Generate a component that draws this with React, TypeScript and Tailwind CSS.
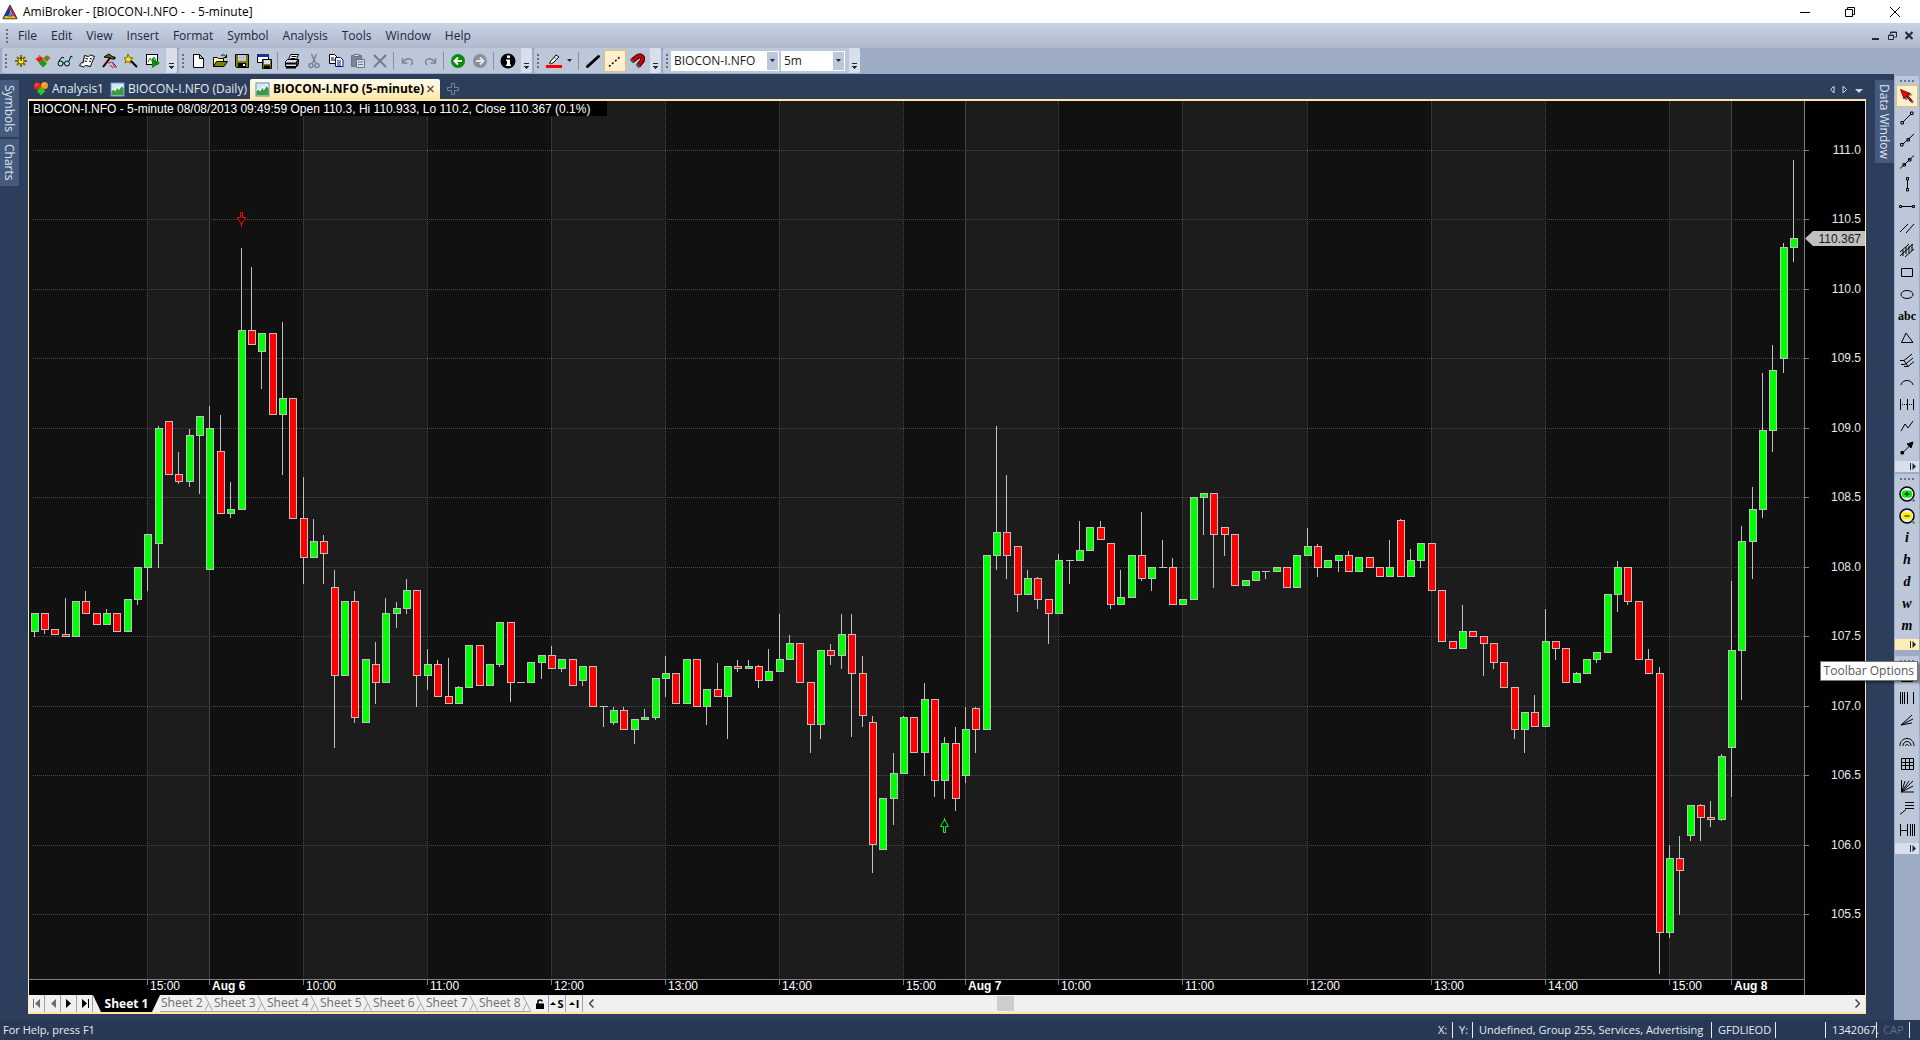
import type { ReactNode } from 'react'

// [high, body top, body bottom, low, direction], in plot units
type Candle = [number, number, number, number, 'up' | 'down' | 'flat']

const CANDLES: Candle[] = [
  [613, 613, 631, 636, 'up'],
  [613, 613, 629, 633, 'down'],
  [629, 629, 634, 634, 'down'],
  [598, 634, 636, 636, 'down'],
  [601, 601, 636, 636, 'up'],
  [591, 601, 613, 613, 'down'],
  [613, 613, 624, 624, 'down'],
  [609, 613, 624, 624, 'up'],
  [613, 613, 631, 631, 'down'],
  [599, 599, 631, 631, 'up'],
  [567, 567, 599, 604, 'up'],
  [534, 534, 567, 590, 'up'],
  [426, 428, 543, 567, 'up'],
  [421, 421, 474, 474, 'down'],
  [452, 474, 481, 483, 'down'],
  [429, 435, 481, 486, 'up'],
  [416, 416, 435, 493, 'up'],
  [406, 428, 569, 569, 'up'],
  [415, 451, 513, 513, 'down'],
  [482, 509, 513, 517, 'up'],
  [248, 330, 509, 509, 'up'],
  [267, 330, 344, 344, 'down'],
  [333, 333, 351, 388, 'up'],
  [333, 333, 414, 414, 'down'],
  [322, 398, 414, 474, 'up'],
  [398, 398, 518, 518, 'down'],
  [477, 518, 557, 583, 'down'],
  [519, 541, 557, 557, 'up'],
  [535, 541, 553, 583, 'down'],
  [570, 587, 675, 747, 'down'],
  [601, 601, 675, 675, 'up'],
  [591, 601, 717, 722, 'down'],
  [659, 659, 722, 722, 'up'],
  [642, 664, 682, 703, 'down'],
  [598, 613, 682, 682, 'up'],
  [602, 608, 613, 627, 'up'],
  [579, 590, 608, 613, 'up'],
  [590, 590, 675, 706, 'down'],
  [649, 664, 675, 689, 'up'],
  [660, 664, 696, 696, 'down'],
  [658, 696, 703, 703, 'down'],
  [686, 687, 703, 703, 'up'],
  [645, 645, 687, 687, 'up'],
  [645, 645, 685, 685, 'down'],
  [664, 664, 685, 685, 'up'],
  [622, 622, 664, 666, 'up'],
  [622, 622, 682, 701, 'down'],
  [682, 682, 682, 682, 'flat'],
  [662, 662, 682, 682, 'up'],
  [655, 655, 662, 678, 'up'],
  [646, 655, 668, 668, 'down'],
  [659, 659, 668, 671, 'up'],
  [659, 659, 685, 685, 'down'],
  [666, 666, 680, 685, 'up'],
  [666, 666, 706, 706, 'down'],
  [706, 706, 706, 726, 'flat'],
  [707, 710, 722, 724, 'up'],
  [707, 710, 729, 729, 'down'],
  [719, 719, 729, 743, 'up'],
  [709, 717, 719, 719, 'up'],
  [678, 678, 717, 719, 'up'],
  [656, 673, 678, 696, 'up'],
  [673, 673, 703, 703, 'down'],
  [659, 659, 703, 703, 'up'],
  [659, 659, 706, 706, 'down'],
  [689, 689, 706, 724, 'up'],
  [663, 689, 696, 696, 'down'],
  [666, 666, 696, 738, 'up'],
  [660, 666, 668, 671, 'down'],
  [660, 666, 668, 668, 'up'],
  [665, 666, 680, 687, 'down'],
  [649, 671, 680, 680, 'up'],
  [614, 659, 671, 671, 'up'],
  [635, 643, 659, 659, 'up'],
  [643, 643, 682, 682, 'down'],
  [682, 682, 724, 752, 'down'],
  [650, 650, 724, 738, 'up'],
  [644, 650, 655, 664, 'down'],
  [614, 634, 655, 668, 'up'],
  [614, 634, 673, 736, 'down'],
  [656, 673, 715, 726, 'down'],
  [716, 722, 844, 872, 'down'],
  [798, 798, 849, 849, 'up'],
  [753, 773, 798, 824, 'up'],
  [716, 717, 773, 773, 'up'],
  [717, 717, 752, 752, 'down'],
  [683, 699, 752, 775, 'up'],
  [699, 699, 780, 796, 'down'],
  [737, 743, 780, 798, 'up'],
  [727, 743, 798, 810, 'down'],
  [707, 729, 775, 782, 'up'],
  [707, 708, 729, 752, 'down'],
  [555, 555, 729, 729, 'up'],
  [426, 532, 555, 569, 'up'],
  [475, 532, 555, 578, 'down'],
  [546, 546, 594, 611, 'down'],
  [570, 578, 594, 594, 'up'],
  [577, 578, 599, 608, 'down'],
  [599, 599, 613, 643, 'down'],
  [554, 560, 613, 613, 'up'],
  [560, 560, 560, 583, 'flat'],
  [521, 550, 560, 560, 'up'],
  [527, 527, 550, 550, 'up'],
  [521, 527, 539, 539, 'down'],
  [543, 543, 604, 608, 'down'],
  [570, 597, 604, 604, 'up'],
  [555, 555, 597, 597, 'up'],
  [512, 555, 578, 580, 'down'],
  [567, 567, 578, 590, 'up'],
  [540, 567, 567, 567, 'flat'],
  [558, 567, 604, 604, 'down'],
  [599, 599, 604, 604, 'up'],
  [497, 497, 599, 599, 'up'],
  [493, 493, 497, 534, 'up'],
  [493, 493, 534, 587, 'down'],
  [527, 527, 534, 555, 'down'],
  [534, 534, 585, 585, 'down'],
  [580, 580, 585, 585, 'up'],
  [571, 571, 580, 580, 'up'],
  [571, 571, 571, 578, 'flat'],
  [567, 567, 571, 571, 'up'],
  [567, 567, 587, 587, 'down'],
  [555, 555, 587, 587, 'up'],
  [528, 546, 555, 555, 'up'],
  [544, 546, 567, 576, 'down'],
  [560, 560, 567, 567, 'up'],
  [555, 555, 560, 571, 'up'],
  [551, 555, 571, 571, 'down'],
  [557, 557, 571, 571, 'up'],
  [557, 557, 567, 567, 'down'],
  [567, 567, 576, 576, 'down'],
  [540, 567, 576, 576, 'up'],
  [519, 520, 576, 576, 'down'],
  [549, 560, 576, 576, 'up'],
  [543, 543, 560, 567, 'up'],
  [543, 543, 590, 590, 'down'],
  [590, 590, 641, 641, 'down'],
  [641, 641, 648, 648, 'down'],
  [605, 631, 648, 648, 'up'],
  [631, 631, 636, 636, 'down'],
  [636, 636, 643, 675, 'down'],
  [643, 643, 662, 668, 'down'],
  [662, 662, 687, 687, 'down'],
  [687, 687, 729, 738, 'down'],
  [712, 712, 729, 752, 'up'],
  [695, 712, 726, 726, 'down'],
  [609, 641, 726, 726, 'up'],
  [641, 641, 648, 659, 'down'],
  [648, 648, 682, 682, 'down'],
  [672, 673, 682, 682, 'up'],
  [659, 659, 673, 673, 'up'],
  [652, 652, 659, 662, 'up'],
  [594, 594, 652, 652, 'up'],
  [561, 567, 594, 611, 'up'],
  [567, 567, 601, 604, 'down'],
  [601, 601, 659, 659, 'down'],
  [649, 659, 673, 673, 'down'],
  [667, 673, 932, 973, 'down'],
  [845, 858, 932, 937, 'up'],
  [836, 858, 870, 914, 'down'],
  [805, 805, 835, 840, 'up'],
  [804, 805, 817, 840, 'down'],
  [801, 817, 819, 826, 'down'],
  [754, 756, 819, 820, 'up'],
  [581, 650, 747, 796, 'up'],
  [526, 541, 650, 699, 'up'],
  [487, 509, 541, 578, 'up'],
  [373, 430, 509, 517, 'up'],
  [345, 370, 430, 451, 'up'],
  [243, 247, 358, 372, 'up'],
  [160, 238, 247, 261, 'up'],
]

const FIRST_BAR_X = 34
const BAR_STEP = 10.3505
const PLOT = { left: 29, top: 101, right: 1804, bottom: 979 }

const CANDLE_FILL = { up: '#00ff00', down: '#ff0000', flat: 'none' }

const barX = (i: number) => FIRST_BAR_X + Math.floor(i * BAR_STEP)

const TIME_MARKS: { bar: number; label: string; day?: boolean }[] = [
  { bar: 11, label: '15:00' },
  { bar: 17, label: 'Aug 6', day: true },
  { bar: 26, label: '10:00' },
  { bar: 38, label: '11:00' },
  { bar: 50, label: '12:00' },
  { bar: 61, label: '13:00' },
  { bar: 72, label: '14:00' },
  { bar: 84, label: '15:00' },
  { bar: 90, label: 'Aug 7', day: true },
  { bar: 99, label: '10:00' },
  { bar: 111, label: '11:00' },
  { bar: 123, label: '12:00' },
  { bar: 135, label: '13:00' },
  { bar: 146, label: '14:00' },
  { bar: 158, label: '15:00' },
  { bar: 164, label: 'Aug 8', day: true },
]

const PRICES = [111, 110.5, 110, 109.5, 109, 108.5, 108, 107.5, 107, 106.5, 106, 105.5]
const priceY = (p: number) => Math.round(150 + (111 - p) * 138.9)

const MENUS = ['File', 'Edit', 'View', 'Insert', 'Format', 'Symbol', 'Analysis', 'Tools', 'Window', 'Help']
const SHEETS = ['Sheet 2', 'Sheet 3', 'Sheet 4', 'Sheet 5', 'Sheet 6', 'Sheet 7', 'Sheet 8']

function Icon({ children, size = 16 }: { children: ReactNode; size?: number }) {
  return (
    <svg width={size} height={size} viewBox="0 0 16 16" fill="none" stroke="#000" aria-hidden="true" className="shrink-0">
      {children}
    </svg>
  )
}

function Chart() {
  const edges = [PLOT.left, ...TIME_MARKS.map((m) => barX(m.bar)), PLOT.right]
  return (
    <svg
      viewBox="29 101 1836 894"
      className="block min-h-0 w-full flex-1 bg-black font-['Liberation_Sans',Arial,sans-serif] text-[12px]"
      role="img"
      aria-label="BIOCON-I.NFO 5-minute candlestick chart"
    >
      {edges.slice(1).map((x, i) => (
        <rect
          key={x}
          x={edges[i]}
          y={PLOT.top}
          width={x - edges[i]}
          height={PLOT.bottom - PLOT.top}
          fill={i % 2 ? '#1c1c1c' : '#111111'}
        />
      ))}
      {PRICES.map((p) => (
        <g key={p}>
          <path d={`M33 ${priceY(p) + 0.5}H1804`} stroke="#4a4a4a" strokeDasharray="1 1" />
          <path d={`M1804 ${priceY(p) + 0.5}H1809`} stroke="#808080" />
          <text x={1861} y={priceY(p) + 4} textAnchor="end" fill="#e8e8e8">
            {p.toFixed(1)}
          </text>
        </g>
      ))}
      {TIME_MARKS.map((m) => {
        const x = barX(m.bar)
        return (
          <g key={m.bar}>
            <path d={`M${x + 0.5} 101V979`} stroke={m.day ? '#444444' : '#4a4a4a'} strokeDasharray={m.day ? undefined : '1 1'} />
            <path d={`M${x + 0.5} 979V985`} stroke="#808080" />
            <text x={x + 3} y={990} fill="#fff" fontWeight={m.day ? 700 : 400}>
              {m.label}
            </text>
          </g>
        )
      })}
      <path d="M29 979.5H1804.5M1804.5 101V995" stroke="#808080" />

      {CANDLES.map(([high, top, bottom, low, dir], i) => {
        const x = barX(i)
        return (
          <g key={i} stroke="#c0c0c0">
            {high < top && <path d={`M${x + 0.5} ${high}V${top}`} />}
            {low > bottom && <path d={`M${x + 0.5} ${bottom + 1}V${low + 1}`} />}
            {dir === 'flat' ? (
              <path d={`M${x - 3} ${top + 0.5}H${x + 5}`} />
            ) : (
              <rect x={x - 2.5} y={top + 0.5} width={7} height={bottom - top} fill={CANDLE_FILL[dir]} />
            )}
          </g>
        )
      })}

      <path d="M240.5 212.5h2v5h3l-4 7-4-7h3z M241.5 223v4" stroke="#ff0000" />
      <path d="M943.5 832.5h2v-6h3l-4-7-4 7h3z M944.5 818v3" stroke="#00ff00" />

      <rect x={29} y={101} width={578} height={15} fill="#000" />
      <text x={33} y={113} fill="#fff">
        BIOCON-I.NFO - 5-minute 08/08/2013 09:49:59 Open 110.3, Hi 110.933, Lo 110.2, Close 110.367 (0.1%)
      </text>

      <path d="M1805 238.5L1813 231H1865V246H1813z" fill="#c0c0c0" />
      <text x={1861} y={243} textAnchor="end" fill="#1a1a1a">
        110.367
      </text>
    </svg>
  )
}

function Grip() {
  return <span className="mx-[3px] h-[14px] w-[2px] shrink-0 bg-[repeating-linear-gradient(#62708c_0_2px,transparent_2px_4px)]" />
}

function ToolButton({ label, active, children }: { label: string; active?: boolean; children: ReactNode }) {
  return (
    <button
      aria-label={label}
      className={`flex h-[22px] w-[22px] shrink-0 items-center justify-center ${
        active ? 'border border-[#e5c365] bg-[#fff1cf]' : ''
      }`}
    >
      {children}
    </button>
  )
}

function Separator() {
  return <span className="mr-[3px] ml-[2px] h-[18px] w-px shrink-0 bg-[#8591a8]" />
}

function Toolbar({ name, children }: { name: string; children: ReactNode }) {
  return (
    <div role="toolbar" aria-label={name} className="flex h-[25px] items-center rounded-[2px] bg-[#bcc7d9]">
      <Grip />
      {children}
      <button aria-label={`${name} options`} className="ml-[2px] flex h-full w-[11px] items-end justify-center rounded-r-[2px] bg-[#d8dfea] pb-[4px]">
        <svg width="5" height="6" viewBox="0 0 5 6" aria-hidden="true" shapeRendering="crispEdges">
          <path d="M0 0h5v1H0zM0 3h5L2.5 6z" fill="#1b293e" />
        </svg>
      </button>
    </div>
  )
}

function Combo({ label, value, width }: { label: string; value: string; width: string }) {
  return (
    <label className={`mr-[2px] flex h-[20px] items-center border border-white bg-white ${width}`}>
      <select aria-label={label} className="h-full min-w-0 flex-1 appearance-none bg-white pl-[2px] text-[12px] leading-[18px] text-[#1b1b1b]">
        <option>{value}</option>
      </select>
      <span className="flex h-full w-[11px] items-center justify-center bg-[#bcc7d9]">
        <svg width="5" height="3" viewBox="0 0 5 3" aria-hidden="true">
          <path d="M0 0h5L2.5 3z" fill="#1b293e" />
        </svg>
      </span>
    </label>
  )
}

function Gems() {
  return (
    <Icon>
      <path d="M.5 6L4.500 2 8.500 6 4.500 10z" fill="#e02020" stroke="none" />
      <path d="M8 5L11.500 1.500 15.500 5 11.500 9z" fill="#7f7a12" stroke="none" />
      <path d="M4 10.500L8 6.500 12 10.500 8 14.500z" fill="#12a012" stroke="none" />
      <path d="M2 5l2.500-2 1 1M9 4l2.500-2 1 1" stroke="#ffffff" strokeOpacity=".5" />
    </Icon>
  )
}

function BrightGems() {
  return (
    <Icon>
      <circle cx="4.500" cy="5" r="3.500" fill="#e8281c" stroke="none" />
      <circle cx="11.500" cy="4.500" r="3.500" fill="#f0a020" stroke="none" />
      <path d="M4 10L8 6l4.500 4L8 14.500z" fill="#28c828" stroke="none" />
      <path d="M2.500 4.500l2-1.500M9.500 4l2-1.500" stroke="#fff" strokeOpacity=".6" />
    </Icon>
  )
}

function ChartThumb() {
  return (
    <Icon size={15}>
      <rect x="1" y="1" width="14" height="14" fill="#cfe6f7" stroke="#5b93c4" />
      <path d="M1.500 14V10l2-2 2 2 2-4 2 3 3-5 2 3v7z" fill="#3f9a3c" stroke="none" />
      <path d="M2 9l2-2 1.500 2L8 5l2 2 2-4 2 3" stroke="#fff" />
    </Icon>
  )
}

function MainToolbars() {
  return (
    <div className="flex h-[26px] items-start gap-[2px] bg-[#9dabc4] pl-[2px]">
      <Toolbar name="Analysis">
        <ToolButton label="Settings">
          <Icon>
            <path d="M8 2v12M2 8h12M4 4l8 8M12 4l-8 8" stroke="#7a6a00" strokeWidth="2" />
            <circle cx="8" cy="8" r="3" fill="#ffe94a" stroke="#7a6a00" />
            <path d="M8 5v3" />
          </Icon>
        </ToolButton>
        <ToolButton label="New analysis">
          <Gems />
        </ToolButton>
        <ToolButton label="Explore">
          <Icon>
            <circle cx="3.500" cy="10.500" r="2.500" fill="#8fe5e5" />
            <circle cx="10" cy="10.500" r="2.500" fill="#8fe5e5" />
            <path d="M6 10h1.500M2 8l3-4 2 1M12 8l2-5 1.500 1" />
          </Icon>
        </ToolButton>
        <ToolButton label="Report">
          <Icon>
            <path d="M5.500 2.500l4 1 2-1.500 4 1.500-3 7-1 3-5-1-2 1.500-4-1.500 2-3 1.500.5z" fill="#fff" />
            <path d="M6.500 5.500l2.500.5M5.500 8l2.500.5M11 5.500l2 .5M10 8l2 .5" />
          </Icon>
        </ToolButton>
        <ToolButton label="Formula editor">
          <Icon>
            <path d="M3 4l5-3 4 3 2 0 0 2-3 0-2-1z" fill="#6b6400" />
            <path d="M9 5l-7 9" strokeWidth="2" />
            <path d="M4 10c1-2 3 0 4 0s3-2 4 0 0 4 2 4h2M9 12l3 3" stroke="#e00000" />
            <path d="M11 9l4 4" stroke="#1530c0" />
          </Icon>
        </ToolButton>
        <ToolButton label="Wizard">
          <Icon>
            <path d="M5 1l1.500 3.500L10 5 7.500 7l.5 3-3-1.500L2 10l1-3L1 5l3-.5z" fill="#f4e02a" stroke="#7a6a00" />
            <path d="M8 8l6 6" strokeWidth="2" />
          </Icon>
        </ToolButton>
        <ToolButton label="Run chart">
          <Icon>
            <rect x="1.500" y="1.500" width="11" height="10" fill="#fff" />
            <path d="M3 9l2-4 2 3 2-4 2 3" stroke="#108010" />
            <path d="M7 5l8 5-8 5z" fill="#0b8a0b" stroke="none" />
          </Icon>
        </ToolButton>
      </Toolbar>

      <Toolbar name="Standard">
        <ToolButton label="New">
          <Icon>
            <path d="M3.500 1.500h6l4 4v9h-10zM9.500 1.500v4h4" fill="#fff" />
          </Icon>
        </ToolButton>
        <ToolButton label="Open">
          <Icon>
            <path d="M1.500 13.500v-9h4l1 1h5v3" fill="#fff8a0" />
            <path d="M1.500 13.500l3-5h11l-3.500 5z" fill="#808000" />
            <path d="M9 3c2-2 4-1 5 1M14.500 1.500v3h-3" />
          </Icon>
        </ToolButton>
        <ToolButton label="Save">
          <Icon>
            <path d="M1.500 1.500h13v13h-12l-1-1z" fill="#808000" />
            <path d="M4 2h8v6H4z" fill="#bcc7d9" stroke="none" />
            <path d="M4 10h8v4H4z" fill="#000" stroke="none" />
            <path d="M9 11h2v2H9z" fill="#fff" stroke="none" />
          </Icon>
        </ToolButton>
        <ToolButton label="Save layout">
          <Icon>
            <path d="M1.500 1.500h11v8h-11z" fill="#fff" />
            <path d="M1 1h12v3H1z" fill="#1a2f9a" stroke="none" />
            <path d="M6.500 6.500h9v9h-9z" fill="#808000" />
            <path d="M8 7h6v4H8z" fill="#d8dfea" stroke="none" />
            <path d="M8 12.500h6v3H8z" fill="#000" stroke="none" />
          </Icon>
        </ToolButton>
        <Separator />
        <ToolButton label="Print">
          <Icon>
            <path d="M4.500 6.500l2-5h8l-2 5" fill="#fff" />
            <path d="M7.500 3.500h5M6.500 5.500h5" />
            <path d="M1.500 8.500l2-2h11l-2 2v5h-11z" fill="#d8dfea" />
            <path d="M12.500 8.500l2-2v5l-2 2.500z" fill="#555" />
            <path d="M1 10.500h12M2 14.500h10" strokeWidth="2" />
          </Icon>
        </ToolButton>
        <ToolButton label="Cut">
          <Icon>
            <path d="M5.500 1l4 9M10.500 1l-4 9" stroke="#7b8494" strokeWidth="1.500" />
            <circle cx="5" cy="12.500" r="2" stroke="#7b8494" strokeWidth="1.500" />
            <circle cx="11" cy="12.500" r="2" stroke="#7b8494" strokeWidth="1.500" />
          </Icon>
        </ToolButton>
        <ToolButton label="Copy">
          <Icon>
            <path d="M1.500 1.500h5l2.500 2.500v6.500H1.500zM3 5h3M3 7h4" fill="#fff" />
            <path d="M7.500 4.500h5l2.500 2.500v6.500H7.500z" fill="#fff" stroke="#101080" />
            <path d="M9 8h4M9 10h4M9 12h4" stroke="#101080" />
          </Icon>
        </ToolButton>
        <ToolButton label="Paste">
          <Icon>
            <path d="M1.500 2.500h10v11h-10z" fill="#7b8494" stroke="#6a7382" />
            <path d="M4 1.500h5v2H4z" fill="#d8dfea" stroke="#6a7382" />
            <path d="M6.500 6.500h8v8h-8z" fill="#d8dfea" stroke="#6a7382" />
            <path d="M8 9h5M8 11.500h5" stroke="#6a7382" />
          </Icon>
        </ToolButton>
        <ToolButton label="Delete">
          <Icon>
            <path d="M2 2l12 12M14 2L2 14" stroke="#727b8b" strokeWidth="2" />
          </Icon>
        </ToolButton>
        <Separator />
        <ToolButton label="Undo">
          <Icon>
            <path d="M2.500 5v5h5M3 9.500c2-4 6-4.500 8-3s2 3 0 5.500" stroke="#7b8494" strokeWidth="1.500" />
          </Icon>
        </ToolButton>
        <ToolButton label="Redo">
          <Icon>
            <path d="M13.500 5v5h-5M13 9.500c-2-4-6-4.500-8-3s-2 3 0 5.500" stroke="#7b8494" strokeWidth="1.500" />
          </Icon>
        </ToolButton>
        <Separator />
        <ToolButton label="Back">
          <Icon>
            <circle cx="8" cy="8" r="7" fill="#0a8a0a" stroke="none" />
            <path d="M12 8H5M8 4.500L4.500 8 8 11.500" stroke="#fff" strokeWidth="2" />
          </Icon>
        </ToolButton>
        <ToolButton label="Forward">
          <Icon>
            <circle cx="8" cy="8" r="7" fill="#8a8f98" stroke="none" />
            <path d="M4 8h7M8 4.500L11.500 8 8 11.500" stroke="#dfe4ec" strokeWidth="2" />
          </Icon>
        </ToolButton>
        <Separator />
        <ToolButton label="Information">
          <Icon>
            <circle cx="8" cy="8" r="7.500" fill="#000" stroke="none" />
            <path d="M7 2.500h3v2.500H7zM6 6.500h4v5h1V13H6v-1.500h1V8H6z" fill="#fff" stroke="none" />
          </Icon>
        </ToolButton>
      </Toolbar>

      <Toolbar name="Format">
        <button aria-label="Line colour" className="flex h-[22px] w-[34px] items-center justify-center gap-[5px]">
          <Icon>
            <path d="M4 9l6-7 3 2-6 6-3 1z" fill="#fff" />
            <path d="M8 4l3 2.500" stroke="#2040d0" />
            <path d="M3 10.500h4" stroke="#108010" />
            <path d="M0 12h16v3H0z" fill="#ff0000" stroke="none" />
          </Icon>
          <svg width="5" height="3" viewBox="0 0 5 3" aria-hidden="true">
            <path d="M0 0h5L2.500 3z" fill="#1b293e" />
          </svg>
        </button>
        <Separator />
        <ToolButton label="Thick line">
          <Icon>
            <path d="M2.500 13.500l11-10" strokeWidth="3" strokeLinecap="round" />
          </Icon>
        </ToolButton>
        <ToolButton label="Dotted line" active>
          <Icon>
            <path d="M2 13.500L14 3" strokeWidth="1.500" strokeDasharray="2 2" />
          </Icon>
        </ToolButton>
        <ToolButton label="Magnet">
          <Icon>
            <path d="M3 8l5-4c4-3 7 1 5 4l-4 5" stroke="#300" strokeWidth="5" />
            <path d="M3 8l5-4c4-3 7 1 5 4l-4 5" stroke="#c80000" strokeWidth="3" />
            <path d="M1.500 6.500l3 3M7.500 11.500l3 3" stroke="#555" strokeWidth="2" />
          </Icon>
        </ToolButton>
      </Toolbar>

      <Toolbar name="Ticker">
        <Combo label="Symbol" value="BIOCON-I.NFO" width="w-[108px]" />
        <Combo label="Interval" value="5m" width="w-[64px]" />
      </Toolbar>
    </div>
  )
}

const DRAW_TOOLS: { label: string; icon: ReactNode; active?: boolean }[] = [
  {
    label: 'Select',
    active: true,
    icon: (
      <>
        <path d="M3 3l11 4-4 1 5 6-2 1.500L9 10l-2 3z" fill="#777" stroke="none" />
        <path d="M1.500 1.500l10 4-3.500 1.500 5 5.500-1.500 1L7 8l-2 3z" fill="#ff0000" stroke="#300" strokeWidth=".7" />
      </>
    ),
  },
  { label: 'Trend line', icon: <path d="M4.500 11.500l7-7M2 11.500h2.500V14H2zM11.500 2H14v2.500h-2.500z" /> },
  { label: 'Ray', icon: <path d="M4 12L15 2M1.500 11.500H4V14H1.500zM8 6.500h2.500V9H8z" /> },
  { label: 'Extended line', icon: <path d="M1 14.500L15 1.500M4 9.500h2.500V12H4zM9.500 4.500H12V7H9.500z" /> },
  { label: 'Vertical line', icon: <path d="M8.500 4v8M7.500 1.500h2V4h-2zM7.500 12.500h2V15h-2z" /> },
  { label: 'Horizontal line', icon: <path d="M3 8.500h10M.5 7.500h2v2h-2zM13.500 7.500h2v2h-2z" /> },
  { label: 'Parallel', icon: <path d="M1 12L9 4M7 13l8-9" /> },
  { label: 'Regression channel', icon: <path d="M1 10L10 2M1 14L14 2M6 15l9-8M4 8v6M7 5v7M10 4v7M13 2v7" /> },
  { label: 'Rectangle', icon: <path d="M2.500 4.500h11v8h-11z" /> },
  { label: 'Ellipse', icon: <ellipse cx="8" cy="8.500" rx="6" ry="4" /> },
  { label: 'Text', icon: null },
  { label: 'Triangle', icon: <path d="M7 3L2.500 12.500h11.500z" /> },
  { label: 'Pitchfork', icon: <path d="M1 8.500h4L13 2M2 12.500h4l8-6.500M5 14.500h4l6-5M5 8.500l4 6" /> },
  { label: 'Arc', icon: <path d="M2 11c1-6 11-6 12 0" /> },
  { label: 'Cycle', icon: <path d="M1.500 3v11M8.500 3v11M14.500 3v11M3 8.500h1M5 8.500h1M7 8.500h1M10 8.500h1M12 8.500h1" /> },
  { label: 'Zig-zag', icon: <path d="M2 13l4-7 3 4 5-7" /> },
  { label: 'Arrow', icon: <path d="M4.500 12l6-6M2 11.500h2.500V14H2zM8 4l6-2-2 6z" fill="#000" /> },
]

const ZOOM_TOOLS: { label: string; fill: string; d: string }[] = [
  { label: 'Zoom in', fill: '#00f000', d: 'M5.500 8h5M8 5.500v5' },
  { label: 'Zoom out', fill: '#fff000', d: 'M5.500 8h5' },
]

const PERIODS = ['i', 'h', 'd', 'w', 'm']

const FIB_TOOLS: { label: string; d: string }[] = [
  { label: 'Retracement', d: 'M2 3.500h12M2 6.500h12M2 9.500h12M2 13.500h12' },
  { label: 'Time zones', d: 'M1.500 2v12M3.500 2v12M5.500 2v12M8.500 2v12M14.500 2v12' },
  { label: 'Fan', d: 'M2 13L13 3M2 13l12-6M2 13l11-2' },
  { label: 'Arcs', d: 'M1 12c0-10 14-10 14 0M4 12c0-6 8-6 8 0M6.500 12c0-2 3-2 3 0' },
  { label: 'Gann square', d: 'M2.500 2.500h12v11h-12zM6.500 2.500v11M10.500 2.500v11M2.500 6.500h12M2.500 9.500h12' },
  { label: 'Gann fan', d: 'M2.500 2v12H15M2.500 14L6 3M2.500 14L14 3M2.500 14L14 8M2.500 14L10 3' },
  { label: 'Extension', d: 'M1 14.500l6-5M6 2.500h9M6 5.500h9M6 8.500h9' },
  { label: 'Time extension', d: 'M1.500 2v12M1.500 8.500h7M8.500 2v12M11.500 2v12M13.500 2v12M15.500 2v12' },
]

function SideToolbar({ name, hot, children }: { name: string; hot?: boolean; children: ReactNode }) {
  return (
    <div role="toolbar" aria-label={name} aria-orientation="vertical" className="mx-px flex flex-col items-center rounded-[2px] bg-[#bcc7d9]">
      <span className="mt-[4px] mb-[3px] h-[2px] w-[14px] bg-[repeating-linear-gradient(90deg,#62708c_0_2px,transparent_2px_4px)]" />
      {children}
      <button
        aria-label={`${name} options`}
        className={`mt-[2px] flex h-[11px] w-full items-center justify-end pr-[3px] ${hot ? 'bg-[#ffedb8]' : 'bg-[#d8dfea]'}`}
      >
        <svg width="6" height="7" viewBox="0 0 6 7" aria-hidden="true">
          <path d="M0 0h1v7H0zM2.500 0v7L6 3.500z" fill="#1b293e" />
        </svg>
      </button>
    </div>
  )
}

function SideToolbars() {
  return (
    <div className="flex w-[26px] shrink-0 flex-col bg-[#9dabc4] pt-[2px]">
      <SideToolbar name="Draw">
        {DRAW_TOOLS.map((t) => (
          <ToolButton key={t.label} label={t.label} active={t.active}>
            {t.icon ? (
              <Icon>{t.icon}</Icon>
            ) : (
              <span className="font-['Liberation_Serif',serif] text-[12px] leading-none font-bold">abc</span>
            )}
          </ToolButton>
        ))}
      </SideToolbar>
      <div className="h-[2px]" />
      <SideToolbar name="View" hot>
        {ZOOM_TOOLS.map((t) => (
          <ToolButton key={t.label} label={t.label}>
            <Icon>
              <circle cx="8" cy="8" r="7" fill="#e8edf5" strokeWidth="1.500" />
              <rect x="3" y="4.500" width="10" height="7" rx="2" fill={t.fill} stroke="none" />
              <path d={t.d} />
              <path d="M13 13l2.500 2.500" stroke="#777" strokeWidth="2" />
            </Icon>
          </ToolButton>
        ))}
        {PERIODS.map((p) => (
          <ToolButton key={p} label={`Period ${p}`}>
            <span className="font-['Liberation_Serif',serif] text-[14px] leading-none font-bold italic">{p}</span>
          </ToolButton>
        ))}
      </SideToolbar>
      <div className="h-[6px]" />
      <SideToolbar name="Fibonacci">
        {FIB_TOOLS.map((t) => (
          <ToolButton key={t.label} label={t.label}>
            <Icon>
              <path d={t.d} />
            </Icon>
          </ToolButton>
        ))}
      </SideToolbar>
    </div>
  )
}

function SideTab({ label, height }: { label: string; height: string }) {
  return (
    <button className={`flex w-[19px] items-center justify-center bg-[#465a7d] text-[12px] leading-[19px] text-[#dfe5ef] [writing-mode:vertical-rl] ${height}`}>
      {label}
    </button>
  )
}

function DocumentTabs() {
  return (
    <div className="flex h-[25px] shrink-0 items-end text-[12px] leading-[18px] text-[#e6ebf3]">
      <button className="flex h-[20px] w-[77px] items-center gap-[3px] pl-[5px] whitespace-nowrap">
        <BrightGems />
        Analysis1
      </button>
      <button className="flex h-[20px] w-[145px] items-center gap-[3px] pl-[5px] whitespace-nowrap">
        <ChartThumb />
        BIOCON-I.NFO (Daily)
      </button>
      <button className="flex h-[20px] w-[190px] items-center gap-[3px] rounded-t-[2px] bg-gradient-to-b from-[#fffcf0] to-[#ffe8a6] pl-[5px] font-bold whitespace-nowrap text-black">
        <ChartThumb />
        BIOCON-I.NFO (5-minute)
        <svg width="8" height="8" viewBox="0 0 8 8" className="mr-[6px] ml-auto" aria-hidden="true">
          <path d="M.5.5l7 7M7.500.5l-7 7" stroke="#5c5138" strokeWidth="1.500" />
        </svg>
      </button>
      <button aria-label="New tab" className="ml-[7px] flex h-[20px] items-center">
        <svg width="12" height="12" viewBox="0 0 12 12" fill="none" aria-hidden="true">
          <path d="M4.500.5h3v4h4v3h-4v4h-3v-4h-4v-3h4z" stroke="#76849d" />
        </svg>
      </button>
      <div className="mr-[3px] ml-auto flex h-[20px] items-center gap-[7px]">
        <svg width="6" height="9" viewBox="0 0 6 9" fill="none" stroke="#cdd5e3">
          <path d="M5 1v7L1.500 4.500z" />
        </svg>
        <svg width="6" height="9" viewBox="0 0 6 9" fill="none" stroke="#cdd5e3">
          <path d="M1 1v7l3.500-3.500z" />
        </svg>
        <svg width="8" height="9" viewBox="0 0 8 9">
          <path d="M0 4h8L4 8z" fill="#cdd5e3" />
        </svg>
      </div>
    </div>
  )
}

function NavButton({ label, d, dim, width }: { label: string; d: string; dim?: boolean; width: string }) {
  return (
    <button aria-label={label} className={`flex h-full items-center justify-center border-r border-[#a0a0a0] bg-[#f0f0f0] ${width}`}>
      <svg width="10" height="9" viewBox="0 0 10 9" aria-hidden="true">
        <path d={d} fill={dim ? '#6d6d6d' : '#000'} />
      </svg>
    </button>
  )
}

function SheetBar() {
  return (
    <div className="flex h-[17px] shrink-0 bg-[#f0f0f0] text-[12px] leading-[16px]">
      <NavButton label="First sheet" dim width="w-[16px]" d="M1 0h1v9H1zM8 0v9L3 4.500z" />
      <NavButton label="Previous sheet" dim width="w-[16px]" d="M8 0v9L3 4.500z" />
      <NavButton label="Next sheet" width="w-[16px]" d="M2 0v9l5-4.500z" />
      <NavButton label="Last sheet" width="w-[16px]" d="M2 0v9l5-4.500zM8 0h1v9H8z" />
      <button className="h-full w-[67px] bg-black text-center font-bold text-white [clip-path:polygon(0_0,100%_0,88%_100%,12%_100%)]">
        Sheet 1
      </button>
      {SHEETS.map((s) => (
        <button key={s} className="flex h-full w-[53px] shrink-0 items-center justify-between border-b border-[#a0a0a0] text-[#6d6d6d]">
          <span className="pl-px whitespace-nowrap">{s}</span>
          <svg width="11" height="16" viewBox="0 0 11 16" fill="none" stroke="#a0a0a0" aria-hidden="true">
            <path d="M2 0l8 16M2 16l4-8" />
          </svg>
        </button>
      ))}
      <button aria-label="Lock sheet" className="flex h-full w-[18px] items-center justify-center border-r border-[#a0a0a0]">
        <svg width="8" height="10" viewBox="0 0 8 10" fill="none" aria-hidden="true">
          <path d="M2 5V2.500C2 .5 6 .5 6 2.500" stroke="#000" strokeWidth="1.500" />
          <path d="M0 4.500h8V10H0z" fill="#000" />
        </svg>
      </button>
      {['S', 'I'].map((s) => (
        <button key={s} aria-label={`Scale ${s}`} className="flex h-full w-[17px] items-center justify-center gap-px border-r border-[#a0a0a0] text-[11px] font-bold">
          <svg width="6" height="3" viewBox="0 0 6 3" aria-hidden="true">
            <path d="M0 3h6L3 0z" fill="#000" />
          </svg>
          {s}
        </button>
      ))}
      <div className="flex min-w-0 flex-1 items-center pr-[5px] pl-[6px]">
        <svg width="5" height="9" viewBox="0 0 5 9" fill="none" stroke="#444" strokeWidth="1.500">
          <path d="M4.500.5l-4 4 4 4" />
        </svg>
        <span className="flex-[403]" />
        <span className="h-[15px] w-[17px] bg-[#cdcdcd]" />
        <span className="flex-[842]" />
        <svg width="5" height="9" viewBox="0 0 5 9" fill="none" stroke="#444" strokeWidth="1.500">
          <path d="M.5.5l4 4-4 4" />
        </svg>
      </div>
    </div>
  )
}

function StatusBar() {
  const cell = 'flex h-[16px] items-center border-r border-[#e6ebf3] pl-[6px] whitespace-nowrap'
  return (
    <footer className="flex h-[20px] shrink-0 items-center bg-[#293955] pr-[10px] pl-[3px] text-[11px] leading-[16px] text-[#e6ebf3]">
      <span>For Help, press F1</span>
      <span className={`ml-auto w-[21px] ${cell}`}>X:</span>
      <span className={`w-[20px] ${cell}`}>Y:</span>
      <span className={`w-[239px] ${cell}`}>Undefined, Group 255, Services, Advertising</span>
      <span className={`w-[64px] ${cell}`}>GFDLIEOD</span>
      <span className={`w-[50px] ${cell}`} />
      <span className={`w-[51px] ${cell}`}>1342067.</span>
      <span className={`w-[33px] text-[#5b6a86] ${cell}`}>CAP</span>
    </footer>
  )
}

export default function App() {
  return (
    <div className="relative flex h-screen min-w-[1200px] flex-col overflow-hidden bg-[#2d3e5c] font-['Open_Sans',sans-serif]">
      <header className="flex h-[23px] shrink-0 items-center bg-white pl-[2px] text-[12px] text-black">
        <Icon>
          <path d="M8 1L1 14h4l3-6z" fill="#2030c8" stroke="none" />
          <path d="M8 1l7 13h-3L7 4z" fill="#d02040" stroke="none" />
          <path d="M1 15l2-3h9l3 3z" fill="#e8c020" stroke="none" />
          <path d="M8 8l2.500 4h-5z" fill="#30b8c8" stroke="#222" strokeWidth=".6" />
          <path d="M8 1L.8 14.800h14.400z" stroke="#222" strokeWidth=".8" />
        </Icon>
        <span className="pl-[5px] whitespace-pre">AmiBroker - [BIOCON-I.NFO -  - 5-minute]</span>
        <div className="mr-[20px] ml-auto flex items-center gap-[35px]">
          <button aria-label="Minimize">
            <svg width="10" height="10" viewBox="0 0 10 10">
              <path d="M0 5.500h10" stroke="#000" />
            </svg>
          </button>
          <button aria-label="Restore">
            <svg width="10" height="10" viewBox="0 0 10 10" fill="none" stroke="#000">
              <path d="M.5 2.500h7v7h-7zM2.500 2.500v-2h7v7h-2" />
            </svg>
          </button>
          <button aria-label="Close">
            <svg width="10" height="10" viewBox="0 0 10 10" stroke="#000">
              <path d="M0 0l10 10M10 0L0 10" />
            </svg>
          </button>
        </div>
      </header>

      <nav className="flex h-[25px] shrink-0 items-center bg-gradient-to-b from-[#cad3e2] to-[#aeb9ce] pl-[3px] text-[12px] text-[#1b293e]">
        <Grip />
        {MENUS.map((m) => (
          <button key={m} className="px-[7px]">
            {m}
          </button>
        ))}
        <div className="mr-[7px] ml-auto flex gap-[8px]">
          <svg width="8" height="9" viewBox="0 0 8 9">
            <path d="M0 7h7v2H0z" fill="#1b293e" />
          </svg>
          <svg width="9" height="9" viewBox="0 0 9 9" fill="none" stroke="#1b293e">
            <path d="M.5 4.500h5v4h-5zM2.500 3V1h6v5h-2M.5 4h5M2.500 1.500h6" />
          </svg>
          <svg width="8" height="9" viewBox="0 0 8 9" stroke="#1b293e" strokeWidth="2">
            <path d="M.5 1l7 7M7.500 1l-7 7" />
          </svg>
        </div>
      </nav>

      <MainToolbars />

      <main className="flex min-h-0 flex-1">
        <div className="flex w-[28px] shrink-0 flex-col gap-[2px] pt-[6px]">
          <SideTab label="Symbols" height="h-[57px]" />
          <SideTab label="Charts" height="h-[47px]" />
        </div>
        <div className="flex min-w-0 flex-1 flex-col pb-[6px]">
          <DocumentTabs />
          <div className="flex min-h-0 flex-1 flex-col border-x border-y-2 border-[#ffe8a6]">
            <Chart />
            <SheetBar />
          </div>
        </div>
        <div className="flex w-[28px] shrink-0 flex-col items-end pt-[6px]">
          <SideTab label="Data Window" height="h-[83px]" />
        </div>
        <SideToolbars />
      </main>

      <StatusBar />

      <div
        role="tooltip"
        className="absolute top-[661px] right-[2px] border border-[#767676] bg-white px-[3px] text-[12px] leading-[18px] text-[#575757] shadow-[2px_2px_2px_rgba(0,0,0,0.4)]"
      >
        Toolbar Options
      </div>
    </div>
  )
}
